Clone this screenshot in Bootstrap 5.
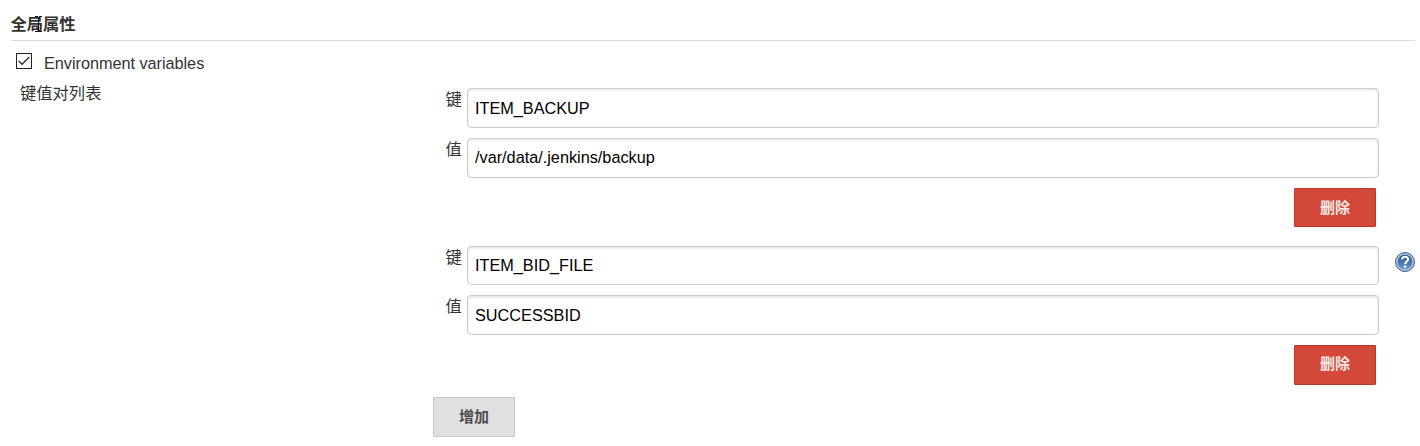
<!DOCTYPE html>
<html lang="zh-CN">
<head>
<meta charset="utf-8">
<meta name="viewport" content="width=device-width, initial-scale=1">
<title>全局属性</title>
<link href="https://cdn.jsdelivr.net/npm/bootstrap@5.3.0/dist/css/bootstrap.min.css" rel="stylesheet">
<style>
body{font-family:"Liberation Sans","Noto Sans CJK SC",sans-serif;font-size:16.3px;line-height:20px;color:#333;background:#fff;overflow:hidden}
.config{padding:0 5px 0 11px}
.section-title{height:41px;padding-top:13px;font-size:16.3px;line-height:22px;font-weight:700;text-indent:-.6px;border-bottom:1px solid #ddd}
.ibeam{left:24px;top:16px}
.option{height:42px;padding:12px 0 0 5px;gap:12px}
.option label{letter-spacing:-.04px}
.option .form-check-input{width:16px;height:16px;margin:0;border:1px solid #222;border-radius:0;background-size:16px}
.option .form-check-input:checked{background-color:#fff;background-image:url("data:image/svg+xml,%3csvg xmlns='http://www.w3.org/2000/svg' viewBox='0 0 16 16'%3e%3cpath fill='none' stroke='%23333' stroke-width='1.4' d='m2.7 8 3.4 3.3 7.2-7.3'/%3e%3c/svg%3e")}
.list-label{width:422px;padding-left:9px}
.pairs{width:946px;padding-top:5px}
.pair{display:grid;grid-template-columns:29px 1fr;column-gap:5px;row-gap:10px}
.pair-a{grid-template-rows:40px 40px 39px;margin-bottom:19px}
.pair-b{grid-template-rows:39px 40px 40px;margin-bottom:12px}
.pair label{padding-left:12.5px;white-space:nowrap;line-height:22px}
.pair .form-control{height:100%;padding:0 7px;font-size:16.25px;color:#000;border:1px solid #ccc;border-radius:4px;box-shadow:inset 0 1px 3px rgba(0,0,0,.13)}
.pair .form-control.raised{padding-bottom:2px}
.action{width:82px;padding:0;font-size:15px;font-weight:700;line-height:20px;border-radius:1px}
.remove{height:100%;margin-right:3px;grid-column:2;justify-self:end;color:#f5e6e4;background:#d24939;border-color:#b83728}
.pair-b .remove{padding-bottom:2px}
.append{height:40px;color:#4d4d4d;background:#e0e0e0;border-color:#c8c8c8}
.help{width:20px;height:20px;margin:169px 0 0 16px}
</style>
</head>
<body>
<main class="config">
  <h1 class="section-title m-0 position-relative">全局属性
    <svg class="ibeam position-absolute" width="7" height="16" viewBox="0 0 7 16" aria-hidden="true"><path d="M0 .5h3M4 .5h3M3.5 1v14M0 15.5h3M4 15.5h3" fill="none" stroke="#111"/></svg>
  </h1>
  <div class="option d-flex">
    <input class="form-check-input flex-shrink-0" type="checkbox" id="env" checked>
    <label for="env">Environment variables</label>
  </div>
  <div class="d-flex align-items-start">
    <div class="list-label flex-shrink-0">键值对列表</div>
    <div class="pairs flex-shrink-0">
      <div class="pair pair-a">
        <label for="k1">键</label><input id="k1" class="form-control" value="ITEM_BACKUP">
        <label for="v1">值</label><input id="v1" class="form-control raised" value="/var/data/.jenkins/backup">
        <button class="btn action remove" type="button">删除</button>
      </div>
      <div class="pair pair-b">
        <label for="k2">键</label><input id="k2" class="form-control" value="ITEM_BID_FILE">
        <label for="v2">值</label><input id="v2" class="form-control" value="SUCCESSBID">
        <button class="btn action remove" type="button">删除</button>
      </div>
      <button class="btn action append" type="button">增加</button>
    </div>
    <svg class="help flex-shrink-0" viewBox="0 0 20 20" role="img" aria-label="帮助">
      <defs><linearGradient id="blue" x2="0" y2="1"><stop stop-color="#204a87"/><stop offset="1" stop-color="#6d9ace"/></linearGradient></defs>
      <circle cx="10" cy="10" r="9.5" fill="#a9c0dd" stroke="#3e608f"/>
      <circle cx="10" cy="10" r="7.3" fill="url(#blue)"/>
      <path d="M7 7.4C7.2 5.4 8.5 4.7 10 4.7c1.9 0 3.1 1 3.1 2.6 0 2.3-2.8 2.2-2.8 4.6" fill="none" stroke="#fff" stroke-width="2.1"/>
      <circle cx="10.2" cy="14.6" r="1.3" fill="#fff"/>
    </svg>
  </div>
</main>
<script src="https://cdn.jsdelivr.net/npm/bootstrap@5.3.0/dist/js/bootstrap.bundle.min.js"></script>
</body>
</html>
